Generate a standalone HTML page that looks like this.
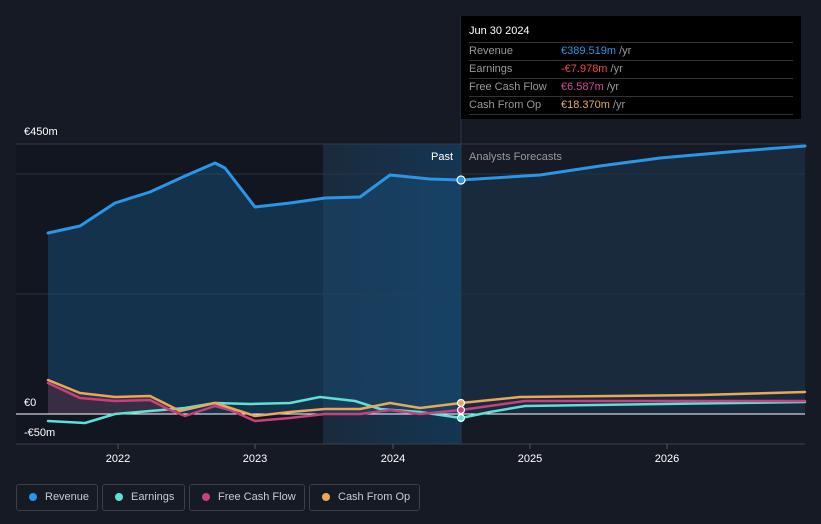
<!DOCTYPE html>
<html><head><style>
body{margin:0;background:#151a24;font-family:"Liberation Sans",sans-serif;}
.wrap{position:relative;width:821px;height:524px;overflow:hidden;background:#151a24}
.tt{position:absolute;left:461px;top:16px;width:340px;height:103px;background:#000;color:#999;font-size:11px}
.tt .h{color:#fff;font-size:11px;padding:9px 0 0 8px;height:17px}
.tt .r{margin:0 8px;border-top:1px solid #333;height:17px;line-height:17px;position:relative}
.tt .r span{position:absolute;left:92px}
.tt .last{border-bottom:1px solid #333}
.lg{position:absolute;top:484px;height:27px;border:1px solid #3a3f4a;border-radius:3px;color:#c8ccd2;font-size:11px;line-height:24px;box-sizing:border-box;padding-left:28px}
.lg i{position:absolute;left:12px;top:8px;width:8px;height:8px;border-radius:50%}
.lbl{position:absolute;font-size:11px;color:#fff}
</style></head><body><div class="wrap">
<svg width="821" height="524" style="position:absolute;left:0;top:0">
<defs><linearGradient id="hl" x1="0" x2="1"><stop offset="0" stop-color="#1a2a3c"/><stop offset="1" stop-color="#143653"/></linearGradient></defs>
<rect x="16" y="144" width="307" height="300" fill="#111620"/>
<rect x="323" y="144" width="138" height="300" fill="url(#hl)"/>
<line x1="16" y1="144" x2="805" y2="144" stroke="#333a46"/>
<line x1="16" y1="174" x2="805" y2="174" stroke="#2c3440"/>
<line x1="16" y1="294" x2="805" y2="294" stroke="#2c3440"/>
<line x1="16" y1="444" x2="805" y2="444" stroke="#3a404a"/>
<line x1="461" y1="16" x2="461" y2="444" stroke="#2c3a4a"/>
<polygon fill="#1a4a72" fill-opacity="0.55" points="48,233 80,226 115,203 150,192 185,176 215,163 225,168 255,207 290,203 325,198 360,197 390,175 430,179 461,180 461,414 48,414"/>
<polygon fill="#1d3248" fill-opacity="0.7" points="461,180 540,175 600,166 660,158 740,151 805,146 805,414 461,414"/>
<polygon fill="#5a2a3a" fill-opacity="0.5" points="48,380 80,393 115,397 150,396 180,411 180,414 48,414"/>
<line x1="16" y1="414" x2="805" y2="414" stroke="#fff" stroke-width="1"/>
<g fill="none" stroke-width="2.5" stroke-linejoin="round" stroke-linecap="round">
<polyline stroke="#5ee0d4" points="48,421 85,423 115,414 150,411 185,408 215,403 250,404 290,403 320,397 355,401 380,409 420,412 461,418 490,412 525,406 805,402"/>
<polyline stroke="#c8407e" points="48,383 80,398 115,401 150,400 170,410 185,416 215,406 230,410 255,421 290,418 325,414 360,414 390,410 420,414 461,410 525,401 805,401"/>
<polyline stroke="#e8a85a" points="48,380 80,393 115,397 150,396 180,411 215,403 255,416 290,412 325,409 360,409 390,403 420,408 461,403 520,397 700,395 805,392"/>
<polyline stroke="#2b95e6" stroke-width="3" points="48,233 80,226 115,203 150,192 185,176 215,163 225,168 255,207 290,203 325,198 360,197 390,175 430,179 461,180 540,175 600,166 660,158 740,151 805,146"/>
</g>
<g stroke="#fff" stroke-width="1.2">
<circle cx="461" cy="180" r="4" fill="#2b95e6"/>
<circle cx="461" cy="418" r="3.5" fill="#5ee0d4"/>
<circle cx="461" cy="410" r="3.5" fill="#c8407e"/>
<circle cx="461" cy="403" r="3.5" fill="#e8a85a"/>
</g>
<g stroke="#555" ><line x1="118" y1="444" x2="118" y2="449"/><line x1="255" y1="444" x2="255" y2="449"/><line x1="393" y1="444" x2="393" y2="449"/><line x1="530" y1="444" x2="530" y2="449"/><line x1="667" y1="444" x2="667" y2="449"/></g>
<g fill="#fff" font-size="11" font-family="Liberation Sans" text-anchor="middle">
<text x="118" y="462">2022</text><text x="255" y="462">2023</text><text x="393" y="462">2024</text><text x="530" y="462">2025</text><text x="667" y="462">2026</text>
</g>
<text x="453" y="160" fill="#fff" font-size="11" text-anchor="end" font-family="Liberation Sans">Past</text>
<text x="469" y="160" fill="#999" font-size="11" font-family="Liberation Sans">Analysts Forecasts</text>
</svg>
<div class="lbl" style="left:24px;top:126px">€450m</div>
<div class="lbl" style="left:24px;top:397px">€0</div>
<div class="lbl" style="left:24px;top:427px">-€50m</div>
<div class="tt">
<div class="h">Jun 30 2024</div>
<div class="r">Revenue<span style="color:#2b95e6">€389.519m <b style="font-weight:normal;color:#999">/yr</b></span></div>
<div class="r">Earnings<span style="color:#f04a4a">-€7.978m <b style="font-weight:normal;color:#999">/yr</b></span></div>
<div class="r">Free Cash Flow<span style="color:#d04a9a">€6.587m <b style="font-weight:normal;color:#999">/yr</b></span></div>
<div class="r last">Cash From Op<span style="color:#e8a85a">€18.370m <b style="font-weight:normal;color:#999">/yr</b></span></div>
</div>
<div class="lg" style="left:16px;width:82px"><i style="background:#2b95e6"></i>Revenue</div>
<div class="lg" style="left:102px;width:83px"><i style="background:#5ee0d4"></i>Earnings</div>
<div class="lg" style="left:189px;width:116px"><i style="background:#c8407e"></i>Free Cash Flow</div>
<div class="lg" style="left:309px;width:111px"><i style="background:#e8a85a"></i>Cash From Op</div>
</div></body></html>
